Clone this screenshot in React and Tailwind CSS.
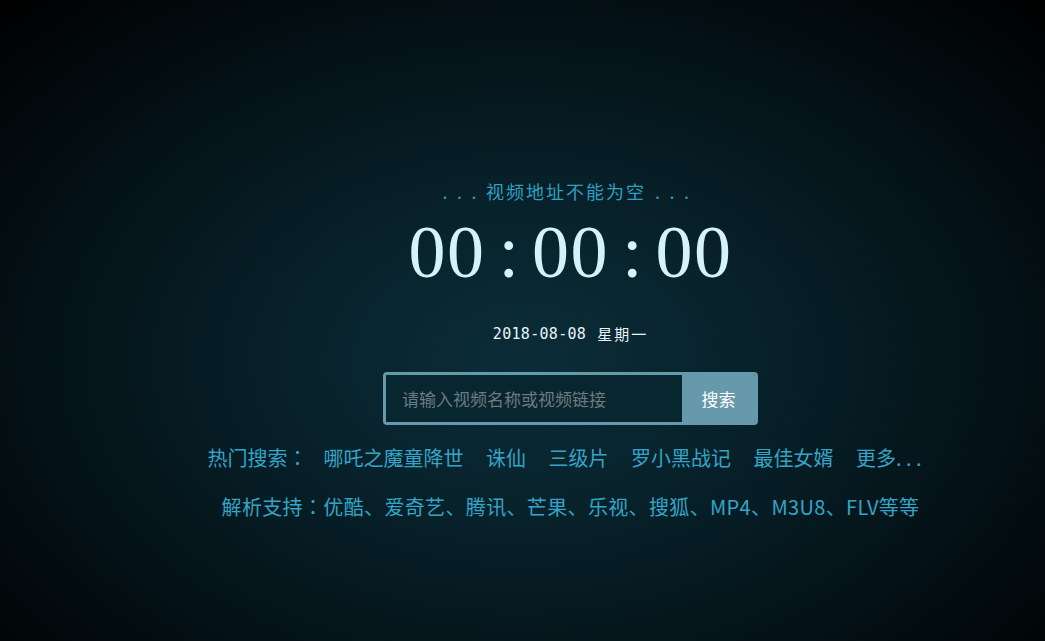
import React from 'react';

const hotWords = ['哪吒之魔童降世', '诛仙', '三级片', '罗小黑战记', '最佳女婿'];

function Dots({ className = '' }) {
  return (
    <span className={`inline-flex ${className}`}>
      {[0, 1, 2].map((i) => (
        <span key={i} className="w-[14.5px] tracking-normal">.</span>
      ))}
    </span>
  );
}

function App() {
  return (
    <div className="w-full h-[641px] overflow-hidden bg-[radial-gradient(ellipse_at_50%_56%,#0b2d38_0%,#08222b_30%,#041217_65%,#000000_100%)] font-['Microsoft_YaHei','Noto_Sans_CJK_SC',sans-serif]">
      <div className="flex flex-col items-center pt-[179px] pl-[96px]">
        {/* status line */}
        <div className="h-[24px] leading-[24px] text-[18px] tracking-[2px] text-[#2f9fc2] flex items-center">
          <Dots />
          <span>视频地址不能为空</span>
          <Dots className="ml-[9px]" />
        </div>

        {/* clock */}
        <div className="mt-[12px] h-[75px] flex items-start leading-[75px] text-[74px] text-[#d3f3f9] font-['Liberation_Serif',serif]">
          <span className="tracking-[1.5px]">00</span>
          <span className="mx-[13px]">:</span>
          <span className="tracking-[1.5px]">00</span>
          <span className="mx-[13px]">:</span>
          <span className="tracking-[1.5px]">00</span>
        </div>

        {/* date */}
        <div className="mt-[34px] h-[20px] leading-[20px] text-[15px] text-[#e6f5f9] flex items-center">
          <span className="font-['DejaVu_Sans_Mono',monospace] tracking-[0.3px]">2018-08-08</span>
          <span className="ml-[11px] tracking-[2px]">星期一</span>
        </div>

        {/* search */}
        <div className="mt-[28px] w-[375px] h-[53px] flex border-[3px] border-[#6699a9] rounded-[4px] overflow-hidden">
          <input
            type="text"
            placeholder="请输入视频名称或视频链接"
            className="flex-1 min-w-0 bg-[#082630] pl-[16px] text-[17px] text-[#d0e6ec] outline-none placeholder:text-[#6b7b80]"
          />
          <button className="w-[73px] bg-[#6699a9] text-white text-[17px]">搜索</button>
        </div>

        {/* hot searches */}
        <div className="mt-[19px] h-[28px] leading-[28px] text-[20px] text-[#35a4c7] flex items-center -ml-[12px]">
          <span>热门搜索<span className="font-['Noto_Sans_CJK_TC']">：</span></span>
          <div className="flex items-center gap-[22.5px] ml-[16px]">
            {hotWords.map((w) => (
              <span key={w} className="cursor-pointer">{w}</span>
            ))}
            <span className="cursor-pointer">更多. . .</span>
          </div>
        </div>

        {/* supported */}
        <div className="mt-[21px] h-[28px] leading-[28px] text-[20px] tracking-[0.35px] text-[#35a4c7]">
          解析支持<span className="font-['Noto_Sans_CJK_TC']">：</span>优酷、爱奇艺、腾讯、芒果、乐视、搜狐、MP4、M3U8、FLV等等
        </div>
      </div>
    </div>
  );
}

export default App;
